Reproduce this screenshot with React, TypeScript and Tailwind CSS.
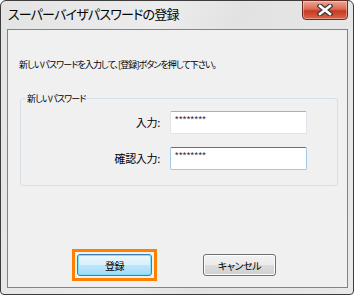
import React from "react";

const jp = "font-['Noto_Sans_CJK_JP','Noto_Sans',sans-serif] [font-feature-settings:'palt']";

function CloseButton() {
    return (
        <div className="-mt-[1px] mr-[5px] flex h-[20px] w-[46px] items-center justify-center rounded-b-[4px] border border-[#6d2a22] bg-[linear-gradient(#eaa797,#dd6a52_45%,#c83a1e_55%,#d9664c)] shadow-[inset_0_0_0_1px_rgba(255,255,255,0.35)]">
            <svg width="16" height="12" viewBox="0 0 16 12">
                <path d="M3 2 L13 10 M13 2 L3 10" stroke="#3a3a3a" strokeWidth="5" strokeLinecap="square" />
                <path d="M3 2 L13 10 M13 2 L3 10" stroke="#ffffff" strokeWidth="2.6" strokeLinecap="square" />
            </svg>
        </div>
    );
}

function PasswordField({ label, focused }: { label: string; focused?: boolean }) {
    return (
        <div className="flex items-center gap-[10px]">
            <span className="w-[139px] text-right text-[11px] tracking-[-0.3px]">{label}</span>
            <div
                className={`h-[23px] w-[137px] rounded-[2px] border bg-white px-[4px] pt-[2px] font-['Liberation_Sans',sans-serif] text-[9px] leading-[11px] tracking-[0.4px] text-[#222] ${
                    focused
                        ? "border-[#a4c9e3] border-t-[#3d7bad]"
                        : "border-[#e2e3ea] border-t-[#abadb3]"
                }`}
            >
                ********
            </div>
        </div>
    );
}

export default function App() {
    return (
        <div className="h-[296px] w-[355px] bg-white">
            <div className="flex h-[295px] w-[354px] flex-col rounded-t-[6px] rounded-b-[4px] border border-[#3c3c3c] bg-[linear-gradient(100deg,#e4e4e4,#ececec_40%,#e2e2e2_60%,#e9e9e9)]">
                {/* title bar */}
                <div className="flex h-[28px] items-start justify-between">
                    <span className={`pl-[7px] pt-[5px] text-[13px] leading-[16px] tracking-[-0.8px] text-black ${jp}`}>
                        スーパーバイザパスワードの登録
                    </span>
                    <CloseButton />
                </div>

                {/* client area */}
                <div className={`ml-[6px] h-[259px] w-[341px] border border-[#838383] bg-[#f0f0f0] text-[9px] leading-[13px] tracking-[-0.9px] text-black ${jp}`}>
                    <p className="pl-[11px] pt-[28px]">新しいパスワードを入力して、[登録]ボタンを押して下さい。</p>

                    <div className="relative ml-[12px] mt-[27px] h-[88px] w-[318px] rounded-[3px] border border-[#d5dfe5]">
                        <span className="absolute left-[5px] top-[-7px] bg-[#f0f0f0] px-[1px]">新しいパスワード</span>
                        <div className="flex flex-col gap-[13px] pt-[12px]">
                            <PasswordField label="入力:" />
                            <PasswordField label="確認入力:" focused />
                        </div>
                    </div>

                    <div className="ml-[64px] mt-[63px] flex items-center gap-[46px] text-[10px] tracking-[-0.4px]">
                        <div className="border-[3px] border-[#ff8000] p-[2px]">
                            <button className="flex h-[22px] w-[75px] items-center justify-center rounded-[3px] border border-[#3c7fb1] bg-[linear-gradient(#eaf6fd,#d9f0fc_50%,#bee6fd_50%,#a7d9f5)] shadow-[inset_0_0_0_1px_#7ee0f7]">
                                登録
                            </button>
                        </div>
                        <button className="flex h-[22px] w-[73px] items-center justify-center rounded-[3px] border border-[#707070] bg-[linear-gradient(#f2f2f2,#ebebeb_50%,#dddddd_50%,#cfcfcf)] shadow-[inset_0_0_0_1px_#fcfcfc]">
                            キャンセル
                        </button>
                    </div>
                </div>
            </div>
        </div>
    );
}
